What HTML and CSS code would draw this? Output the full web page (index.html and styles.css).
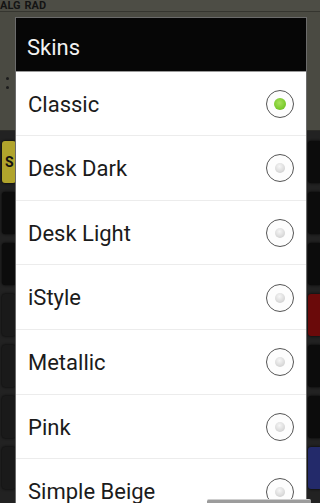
FILE: index.html
```html
<!DOCTYPE html>
<html>
<head>
<meta charset="utf-8">
<link rel="stylesheet" href="styles.css">
</head>
<body>
<div class="calc">
  <div class="status"><span>ALG</span><span>RAD</span></div>
  <div class="display"><span class="dots"><i></i><i></i></span></div>
  <div class="keypad">
    <div class="keyrow"><div class="key yellow">S</div><div class="fill"></div><div class="key"></div></div>
    <div class="keyrow"><div class="key"></div><div class="fill"></div><div class="key"></div></div>
    <div class="keyrow"><div class="key"></div><div class="fill"></div><div class="key"></div></div>
    <div class="keyrow"><div class="key grey"></div><div class="fill"></div><div class="key red"></div></div>
    <div class="keyrow"><div class="key grey"></div><div class="fill"></div><div class="key"></div></div>
    <div class="keyrow"><div class="key grey"></div><div class="fill"></div><div class="key"></div></div>
    <div class="keyrow"><div class="key grey"></div><div class="fill"></div><div class="key blue"></div></div>
  </div>
</div>

<div class="dialog">
  <div class="title">Skins</div>
  <ul class="list">
    <li class="item"><span>Classic</span><span class="radio on"></span></li>
    <li class="item"><span>Desk Dark</span><span class="radio"></span></li>
    <li class="item"><span>Desk Light</span><span class="radio"></span></li>
    <li class="item"><span>iStyle</span><span class="radio"></span></li>
    <li class="item"><span>Metallic</span><span class="radio"></span></li>
    <li class="item"><span>Pink</span><span class="radio"></span></li>
    <li class="item"><span>Simple Beige</span><span class="radio"></span></li>
  </ul>
</div>
<div class="toast"></div>
</body>
</html>
```

FILE: styles.css
```css
html, body {
  margin: 0;
  padding: 0;
  width: 320px;
  height: 503px;
  overflow: hidden;
  background: #232323;
  font-family: Roboto, "Noto Sans", sans-serif;
}

.calc {
  display: flex;
  flex-direction: column;
  height: 503px;
}

.status {
  height: 11px;
  background: #4d4d45;
  border-bottom: 1px solid #35352f;
  display: flex;
  gap: 4px;
  padding-left: 0;
  font-size: 11px;
  font-weight: bold;
  line-height: 11px;
  color: #141414;
}

.display {
  height: 118px;
  background: #4a4a42;
  border-bottom: 1px solid #2a2a26;
  position: relative;
}

.dots {
  display: flex;
  flex-direction: column;
  gap: 6px;
  padding: 65px 0 0 6px;
}

.dots i {
  display: block;
  width: 3px;
  height: 3px;
  background: #1c1c1c;
  border-radius: 50%;
}

.keypad {
  flex: 1;
  display: flex;
  flex-direction: column;
  padding-top: 10px;
  gap: 9px;
  background: #222222;
}

.keyrow {
  display: flex;
  height: 42px;
  gap: 4px;
}

.key {
  width: 14px;
  background: #0c0c0c;
  border-radius: 3px;
  box-shadow: 0 0 3px #000;
}

.key:first-child {
  margin-left: 2px;
}

.key:last-child {
  margin-right: -2px;
}

.fill { flex: 1; }

.key.yellow {
  background: #b1a42c;
  color: #111;
  font-size: 14px;
  font-weight: bold;
  line-height: 42px;
  text-indent: 3px;
  overflow: hidden;
}

.key.grey { background: #1a1a1a; }
.key.red { background: #6a0a0a; }
.key.blue { background: #232a6a; }

.dialog {
  position: absolute;
  left: 15px;
  top: 17px;
  width: 290px;
  height: 486px;
  overflow: hidden;
  border: 1px solid #6b6b6b;
  border-bottom: none;
  background: #ffffff;
}

.title {
  height: 53px;
  background: #060606;
  color: #f2f2f2;
  font-size: 22px;
  line-height: 59px;
  padding-left: 11px;
  border-bottom: 1px solid #9a9a9a;
}

.list {
  list-style: none;
  margin: 0;
  padding: 0;
}

.item {
  height: 62.7px;
  border-bottom: 1px solid #ececec;
  display: flex;
  align-items: center;
  justify-content: space-between;
  padding: 1px 12px 0 12px;
  font-size: 22px;
  color: #1b1b1b;
}

.item:first-child {
  height: 62px;
}

.radio {
  width: 26px;
  height: 26px;
  border: 1.5px solid #555555;
  border-radius: 50%;
  display: flex;
  align-items: center;
  justify-content: center;
  background: #fdfdfd;
}

.radio::after {
  content: "";
  width: 10px;
  height: 10px;
  border-radius: 50%;
  background: radial-gradient(circle at 45% 35%, #f6f6f6 0%, #dddddd 55%, #c4c4c4 100%);
}

.radio.on::after {
  width: 12px;
  height: 12px;
  background: radial-gradient(circle at 45% 40%, #a8e25c 0%, #7ccb2e 60%, #66b220 100%);
}

.toast {
  position: absolute;
  left: 207px;
  top: 499px;
  width: 104px;
  height: 6px;
  background: #9c9c9c;
  border-top: 1px solid #cfcfcf;
  border-radius: 2px 2px 0 0;
}
```
